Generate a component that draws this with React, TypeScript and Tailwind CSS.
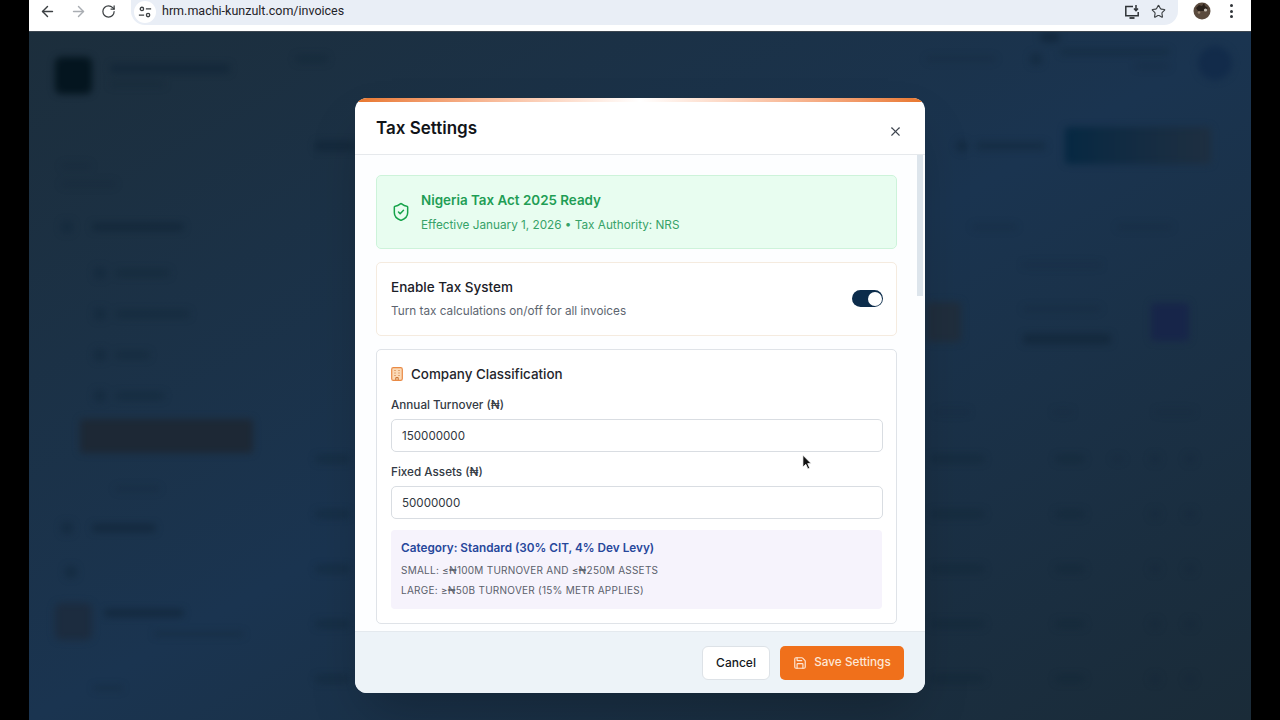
import { ArrowLeft, ArrowRight, RotateCw, Save, ShieldCheck, Star, X } from "lucide-react";

function Bar({ className }: { className: string }) {
  return <div className={`rounded-sm bg-[#0f2335]/60 ${className}`} />;
}

function NavRow({ barClass, indent }: { barClass: string; indent?: boolean }) {
  return (
    <div className={`flex h-[41px] items-center ${indent ? "gap-[9px] pl-[65px]" : "gap-[19px] pl-[32px]"}`}>
      <div className="size-3 rounded-sm bg-[#10263a]/50" />
      <Bar className={`h-2 ${barClass}`} />
    </div>
  );
}

function Sidebar() {
  return (
    <aside className="flex w-[255px] shrink-0 flex-col pl-[26px]">
      <div className="flex h-[63px] items-center gap-[18px]" style={{ paddingTop: 24 }}>
        <div className="size-[37px] rounded-md bg-[#04151f]" />
        <div className="flex flex-col gap-2">
          <Bar className="h-[9px] w-[120px]" />
          <Bar className="h-1.5 w-[55px] opacity-50" />
        </div>
      </div>
      <div className="mt-[68px] flex flex-col gap-3 pl-[6px]">
        <Bar className="h-1.5 w-[30px] opacity-40" />
        <Bar className="h-1.5 w-[55px] opacity-40" />
      </div>
      <div className="mt-[19px] -ml-[26px]">
        <NavRow barClass="w-[92px]" />
        <div className="h-[5px]" />
        <NavRow indent barClass="w-[55px] opacity-60" />
        <NavRow indent barClass="w-[75px] opacity-60" />
        <NavRow indent barClass="w-[35px] opacity-60" />
        <NavRow indent barClass="w-[50px] opacity-60" />
      </div>
      <div className="mt-[3px] ml-[25px] h-[34px] w-[173px] rounded-sm bg-[#1d2835]" />
      <Bar className="mt-[33px] ml-[60px] h-1.5 w-[45px] opacity-40" />
      <div className="mt-[15px] -ml-[26px]">
        <NavRow barClass="w-[64px]" />
      </div>
      <div className="mt-[18px] size-3 translate-x-[10px] rounded-sm bg-[#10263a]/50" />
      <div className="mt-[25px] flex h-[37px] gap-3">
        <div className="size-[37px] shrink-0 rounded-md bg-[#1c2c3f]" />
        <div className="flex flex-col gap-[14px] pt-[6px]">
          <Bar className="h-2 w-[80px]" />
          <Bar className="ml-[50px] h-1.5 w-[90px] opacity-50" />
        </div>
      </div>
      <Bar className="mt-[45px] ml-[38px] h-1.5 w-[30px] opacity-50" />
    </aside>
  );
}

function TableRow({ extra }: { extra?: boolean }) {
  return (
    <div className="flex h-[55px] items-center">
      <Bar className="h-2 w-[35px] opacity-60" />
      <div className="flex-1" />
      <Bar className="h-2 w-[55px] opacity-60" />
      <div className="w-[70px]" />
      <Bar className="h-2 w-[30px] opacity-60" />
      <div className="flex w-[65px] justify-center">{extra && <Bar className="h-1.5 w-3 opacity-40" />}</div>
      <Bar className="h-2.5 w-2.5 opacity-40" />
      <div className="w-[25px]" />
      <Bar className="h-2.5 w-2.5 opacity-40" />
    </div>
  );
}

function Dashboard() {
  return (
    <div className="flex h-full blur-[3.5px]">
      <Sidebar />
      <main className="flex min-w-0 flex-1 flex-col pr-[19px] pl-[11px]">
        <div className="flex h-[62px] items-center">
          <Bar className="mb-[8px] h-2 w-[33px] opacity-60" />
          <div className="flex-1" />
          <Bar className="mb-[8px] h-1.5 w-[70px] opacity-40" />
          <div className="relative ml-[34px] mb-[8px] size-3 rounded-sm bg-[#10263a]/50">
            <div className="absolute -top-[21px] left-[10px] h-[10px] w-[20px] rounded-full bg-[#10263a]/80" />
          </div>
          <div className="mb-[8px] ml-[18px] flex flex-col items-end gap-2">
            <Bar className="h-1.5 w-[110px] opacity-60" />
            <Bar className="h-1.5 w-[35px] opacity-40" />
          </div>
          <div className="ml-[28px] size-[34px] rounded-full bg-[#122b4a]" />
        </div>
        <div className="mt-[33px] flex h-[37px] items-center justify-end pr-[21px]">
          <Bar className="mr-auto ml-[20px] h-2.5 w-[40px]" />
          <div className="size-3 rounded-full bg-[#10263a]/60" />
          <Bar className="ml-2 h-2 w-[70px] opacity-70" />
          <div className="ml-[19px] h-[37px] w-[146px] rounded-sm bg-linear-to-r from-[#062842] to-[#1e2f41]" />
        </div>
        <div className="mt-[60px] flex justify-end gap-[100px] pr-[60px]">
          <Bar className="h-1.5 w-[45px] opacity-40" />
          <Bar className="h-1.5 w-[55px] opacity-40" />
        </div>
        <div className="mt-[32px] flex justify-end pr-[130px]">
          <Bar className="h-1.5 w-[80px] opacity-30" />
        </div>
        <div className="mt-[34px] flex h-[40px] items-center pr-[21px]">
          <div className="ml-auto flex w-[285px] items-center">
            <div className="h-[40px] w-[35px] rounded-sm bg-[#202e3d]" />
            <div className="mt-[5px] ml-[62px] flex flex-col gap-[22px]">
              <Bar className="h-1.5 w-[78px] opacity-40" />
              <Bar className="h-2.5 w-[88px]" />
            </div>
            <div className="ml-[40px] size-[38px] rounded-sm bg-[#172549]" />
          </div>
        </div>
        <div className="mt-[67px] ml-auto flex w-[297px] justify-between pr-[37px]">
          <Bar className="h-1.5 w-[35px] opacity-30" />
          <Bar className="h-1.5 w-[20px] opacity-30" />
          <Bar className="h-1.5 w-[40px] opacity-30" />
        </div>
        <div className="mt-[16px] pr-[37px] pl-[20px]">
          <TableRow extra />
          <TableRow />
          <TableRow />
          <TableRow />
          <TableRow />
        </div>
      </main>
    </div>
  );
}

function BrowserBar() {
  return (
    <div className="flex h-[32px] shrink-0 border-b border-[#3c4650] bg-white text-[#3c4043]">
      <div className="flex h-[23px] w-[102px] items-center gap-[14px] pl-[10px]">
        <ArrowLeft className="size-[17px]" strokeWidth={2} />
        <ArrowRight className="size-[17px] text-[#a9adb2]" strokeWidth={2} />
        <RotateCw className="size-[15px]" strokeWidth={2} />
      </div>
      <div className="flex h-[25px] w-[1047px] items-center rounded-b-[14px] bg-[#e9eef6] pb-[2px] pl-[3px]">
        <div className="grid size-[22px] place-items-center rounded-full bg-white">
          <svg viewBox="0 0 16 16" className="size-[14px]" fill="none" stroke="#3c4043" strokeWidth="1.5">
            <circle cx="4.5" cy="4.5" r="1.9" />
            <path d="M9 4.5h6M1 11.5h6" />
            <circle cx="11.5" cy="11.5" r="1.9" />
          </svg>
        </div>
        <span className="ml-[6px] font-['Roboto',sans-serif] text-[12.5px] text-[#1f2328]">hrm.machi-kunzult.com/invoices</span>
        <div className="ml-auto flex items-center gap-[11px] pr-[12px]">
          <svg viewBox="0 0 16 16" className="size-[16px]" fill="none" stroke="#2f3337" strokeWidth="1.5">
            <path d="M9 2.5H1.8v9.2h12.4V8" />
            <path d="M5.5 14h5" strokeWidth="1.8" />
            <path d="M12 1v5M10 4.4l2 2.2 2-2.2" />
          </svg>
          <Star className="size-[15px]" strokeWidth={1.8} />
        </div>
      </div>
      <div className="flex flex-1 items-center pb-[9px] pl-[15px]">
        <svg viewBox="0 0 18 18" className="size-[18px]">
          <circle cx="9" cy="9" r="8.5" fill="#5a4a3d" />
          <path d="M3 6l3-3 3 1 2-3 1 3 3 2-3 3H5z" fill="#2a211b" />
          <circle cx="12.5" cy="8" r="1.6" fill="#c9c2b8" />
          <circle cx="6" cy="10.5" r="1.3" fill="#9a8672" />
        </svg>
        <div className="ml-[19px] flex flex-col gap-[2.5px]">
          <div className="size-[3px] rounded-full bg-[#2f3337]" />
          <div className="size-[3px] rounded-full bg-[#2f3337]" />
          <div className="size-[3px] rounded-full bg-[#2f3337]" />
        </div>
      </div>
    </div>
  );
}

function TaxField({ label, value }: { label: string; value: string }) {
  return (
    <div>
      <label className="block text-[11.7px] leading-[15px] font-medium text-[#333a44]">{label}</label>
      <input
        readOnly
        value={value}
        className="mt-[6px] block h-[33px] w-full rounded-[5px] border border-[#d9dde2] bg-white px-[10px] font-['Inter',sans-serif] text-[11.6px] text-[#2f3640] outline-none"
      />
    </div>
  );
}

function TaxSettingsModal() {
  return (
    <div className="absolute top-[66px] left-[326px] flex h-[595px] w-[570px] flex-col overflow-hidden rounded-[12px] bg-white font-['Inter',sans-serif] shadow-2xl">
      <div className="h-[4px] shrink-0 bg-linear-to-r from-[#e8762a] via-white to-[#e8762a]" />
      <div className="flex h-[53px] shrink-0 items-center justify-between border-b border-[#e6e9ec] pr-[22px] pl-[21px]">
        <h2 className="pt-[1px] text-[17px] font-semibold text-[#111418]">Tax Settings</h2>
        <X className="mt-[6px] size-[15px] text-[#3f464f]" strokeWidth={1.8} />
      </div>
      <div className="relative flex min-h-0 flex-1 flex-col gap-[13px] overflow-hidden bg-[#fdfeff] pt-[20px] pr-[28px] pl-[21px]">
        <div className="absolute top-0 right-[2px] h-[141px] w-[6px] bg-[#dde5ec]" />
        <div className="flex h-[74px] shrink-0 items-center gap-[10px] rounded-[5px] border border-[#cdf3da] bg-[#e8fdf0] pl-[14px]">
          <ShieldCheck className="size-[20px] text-[#16a34a]" strokeWidth={1.8} />
          <div>
            <p className="text-[13.4px] leading-[18px] font-semibold text-[#1f9d55]">Nigeria Tax Act 2025 Ready</p>
            <p className="mt-[8px] text-[11.75px] leading-[16px] text-[#36a268]">Effective January 1, 2026 • Tax Authority: NRS</p>
          </div>
        </div>
        <div className="flex h-[74px] shrink-0 items-center justify-between rounded-[5px] border border-[#f5ebdf] bg-white pr-[13px] pl-[14px]">
          <div className="pb-[2px]">
            <p className="text-[13.5px] leading-[18px] font-medium text-[#1b2027]">Enable Tax System</p>
            <p className="mt-[7px] text-[11.75px] leading-[16px] text-[#5d6570]">Turn tax calculations on/off for all invoices</p>
          </div>
          <div className="mb-[1px] flex h-[17px] w-[31px] items-center justify-end rounded-full bg-[#0c2c4b] pr-[1px]">
            <div className="size-[14px] rounded-full bg-white" />
          </div>
        </div>
        <div className="shrink-0 rounded-[5px] border border-[#dfe3e8] bg-white pt-[15px] pr-[13px] pb-[14px] pl-[14px]">
          <div className="flex items-center gap-[8px]">
            <svg viewBox="0 0 12 14" className="h-[14px] w-[12px]">
              <rect x="0.7" y="0.7" width="10.6" height="12.6" rx="1.6" fill="#fbd9b5" stroke="#e98a45" strokeWidth="1.2" />
              <path d="M3.5 3.5h1M7.5 3.5h1M3.5 6h1M7.5 6h1M3.5 8.5h1M7.5 8.5h1" stroke="#c9702e" strokeWidth="1" />
              <path d="M4.8 13v-2.4h2.4V13" stroke="#c9702e" strokeWidth="1" fill="none" />
            </svg>
            <h3 className="text-[13.4px] leading-[18px] font-medium text-[#1f252c]">Company Classification</h3>
          </div>
          <div className="mt-[15px] flex flex-col gap-[13px]">
            <TaxField label="Annual Turnover (₦)" value="150000000" />
            <TaxField label="Fixed Assets (₦)" value="50000000" />
          </div>
          <div className="mt-[11px] mr-[1px] h-[79px] rounded-[4px] bg-[#f6f3fc] px-[10px] pt-[10px]">
            <p className="text-[11.75px] leading-[17px] font-semibold text-[#27479b]">Category: Standard (30% CIT, 4% Dev Levy)</p>
            <p className="mt-[6px] text-[10px] leading-[14px] tracking-[0.25px] text-[#5a606b] uppercase">Small: ≤₦100M turnover and ≤₦250M assets</p>
            <p className="mt-[6px] text-[10px] leading-[14px] tracking-[0.25px] text-[#5a606b] uppercase">Large: ≥₦50B turnover (15% METR applies)</p>
          </div>
        </div>
      </div>
      <div className="flex h-[62px] shrink-0 items-center justify-end gap-[10px] border-t border-[#e4e9ee] bg-[#edf3f8] pr-[21px]">
        <button className="h-[34px] w-[68px] rounded-[6px] border border-[#dde2e7] bg-white text-[12px] font-medium text-[#14181d]">Cancel</button>
        <button className="flex h-[34px] w-[124px] items-center justify-center gap-[7px] rounded-[5px] bg-[#f0701b] text-[11.75px] font-medium text-[#fde7d6]">
          <Save className="size-[14px]" strokeWidth={2} />
          Save Settings
        </button>
      </div>
    </div>
  );
}

function Cursor() {
  return (
    <svg viewBox="0 0 12 18" className="absolute top-[422px] left-[773px] h-[17px] w-[11px]">
      <path d="M1 1v13l3.2-3 2.2 5 2-.9-2.2-4.9H10z" fill="#111" stroke="#fff" strokeWidth="0.8" />
    </svg>
  );
}

export default function App() {
  return (
    <div className="flex h-screen w-full justify-center overflow-hidden bg-black">
      <div className="flex h-full w-[1222px] flex-col">
        <BrowserBar />
        <div className="relative min-h-0 flex-1 overflow-hidden bg-linear-to-br from-[#1c2e3c] via-[#1a3450] to-[#1a2b38]">
          <Dashboard />
          <TaxSettingsModal />
          <Cursor />
        </div>
      </div>
    </div>
  );
}
